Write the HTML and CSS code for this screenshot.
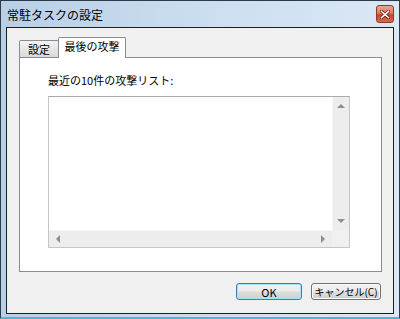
FILE: index.html
```html
<!DOCTYPE html>
<html lang="ja">
<head>
    <meta charset="UTF-8">
    <title>常駐タスクの設定</title>
    <link rel="stylesheet" href="styles.css">
</head>
<body>
    <div class="ventana">
        <div class="titulo">
            <span class="titulo-texto">常駐タスクの設定</span>
            <div class="cerrar">
                <svg width="10" height="9" viewBox="0 0 10 9">
                    <path d="M1.5 1.5 L8.5 7.5 M8.5 1.5 L1.5 7.5" stroke="#6b2416" stroke-width="3.2" stroke-linecap="square"/>
                    <path d="M1.5 1.5 L8.5 7.5 M8.5 1.5 L1.5 7.5" stroke="#ffffff" stroke-width="1.6" stroke-linecap="square"/>
                </svg>
            </div>
        </div>
        <div class="cliente">
            <div class="pestanas">
                <div class="pestana">設定</div>
                <div class="pestana activa">最後の攻撃</div>
            </div>
            <div class="panel">
                <div class="etiqueta">最近の10件の攻撃リスト:</div>
                <div class="lista">
                    <div class="lista-fila">
                        <div class="lista-contenido"></div>
                        <div class="barra-v">
                            <span class="flecha arriba"></span>
                            <span class="flecha abajo"></span>
                        </div>
                    </div>
                    <div class="barra-h">
                        <div class="barra-h-pista">
                            <span class="flecha izquierda"></span>
                            <span class="flecha derecha"></span>
                        </div>
                        <div class="esquina"></div>
                    </div>
                </div>
            </div>
            <div class="botones">
                <button class="boton defecto">OK</button>
                <button class="boton">キャンセル(C)</button>
            </div>
        </div>
    </div>
</body>
</html>
```

FILE: styles.css
```css
/* Ventana estilo Vista */
body {
    margin: 0;
    padding: 0;
    font-family: "Noto Sans CJK JP", "Noto Sans", sans-serif;
    font-size: 11px;
    color: #000;
    background: #fff;
}

.ventana {
    width: 400px;
    height: 319px;
    box-sizing: border-box;
    border: 1px solid #2d3a48;
    border-bottom: 2px solid #4eb7c8;
    background: linear-gradient(90deg, #b8cfe6 0%, #c9dcef 45%, #dbe8f5 100%);
    display: flex;
    flex-direction: column;
}

.titulo {
    height: 26px;
    display: flex;
    align-items: flex-start;
    justify-content: space-between;
    padding: 0 5px 0 6px;
}

.titulo-texto {
    font-size: 12px;
    line-height: 14px;
    margin-top: 7px;
}

.cerrar {
    width: 18px;
    height: 18px;
    margin-top: 4px;
    box-sizing: border-box;
    border: 1px solid #8a3b2b;
    border-radius: 3px;
    background: linear-gradient(180deg, #eba590 0%, #de7c62 45%, #c8442a 55%, #d8684c 100%);
    display: flex;
    align-items: center;
    justify-content: center;
}

.cliente {
    flex: 1;
    margin: 0 5px 3px 5px;
    border: 1px solid #1e1e1e;
    background-color: #f0f0f0;
    display: flex;
    flex-direction: column;
}

.pestanas {
    display: flex;
    align-items: flex-end;
    margin: 9px 0 0 12px;
    height: 20px;
}

.pestana {
    height: 16px;
    width: 38px;
    border: 1px solid #898c95;
    border-bottom: none;
    background: linear-gradient(180deg, #f3f3f3 0%, #e6e6e6 50%, #d9d9d9 100%);
    text-align: center;
    line-height: 16px;
    border-radius: 2px 2px 0 0;
}

.pestana.activa {
    height: 20px;
    width: 66px;
    margin-left: -1px;
    margin-bottom: -1px;
    background: #fff;
    line-height: 17px;
    position: relative;
    z-index: 1;
}

.panel {
    height: 215px;
    box-sizing: border-box;
    margin: 0 11px 0 12px;
    border: 1px solid #898c95;
    background: #fff;
    padding: 15px 0 0 28px;
}

.etiqueta {
    line-height: 14px;
    height: 14px;
    margin-bottom: 9px;
}

.lista {
    width: 302px;
    height: 152px;
    box-sizing: border-box;
    border: 1px solid #c3c5cb;
    border-top-color: #a9abb2;
    display: flex;
    flex-direction: column;
}

.lista-fila {
    flex: 1;
    display: flex;
}

.lista-contenido {
    flex: 1;
    background: #fff;
}

.barra-v {
    width: 17px;
    background: #ededed;
    border-left: 1px solid #f6f6f6;
    box-sizing: border-box;
    display: flex;
    flex-direction: column;
    justify-content: space-between;
    align-items: center;
    padding: 7px 0;
}

.barra-h {
    height: 17px;
    display: flex;
}

.barra-h-pista {
    flex: 1;
    background: #ededed;
    border-top: 1px solid #f6f6f6;
    display: flex;
    justify-content: space-between;
    align-items: center;
    padding: 0 7px;
}

.esquina {
    width: 17px;
    background: #f0f0f0;
}

.flecha {
    width: 0;
    height: 0;
    display: block;
}

.arriba {
    border-left: 4px solid transparent;
    border-right: 4px solid transparent;
    border-bottom: 4px solid #8e8e8e;
}

.abajo {
    border-left: 4px solid transparent;
    border-right: 4px solid transparent;
    border-top: 4px solid #8e8e8e;
}

.izquierda {
    border-top: 4px solid transparent;
    border-bottom: 4px solid transparent;
    border-right: 4px solid #8e8e8e;
}

.derecha {
    border-top: 4px solid transparent;
    border-bottom: 4px solid transparent;
    border-left: 4px solid #8e8e8e;
}

.botones {
    display: flex;
    justify-content: flex-end;
    gap: 9px;
    margin: 11px 12px 0 0;
}

.boton {
    height: 17px;
    width: 70px;
    padding: 0;
    font-family: "Noto Sans CJK JP", "Noto Sans", sans-serif;
    font-size: 10px;
    line-height: 14px;
    white-space: nowrap;
    color: #000;
    border: 1px solid #707070;
    border-radius: 3px;
    background: linear-gradient(180deg, #f2f2f2 0%, #ebebeb 48%, #dddddd 52%, #cfcfcf 100%);
    box-shadow: inset 0 0 0 1px #fbfbfb;
}

.boton.defecto {
    width: 66px;
    font-size: 11px;
    border-color: #3c7fb1;
    box-shadow: inset 0 0 0 1px #a5e0f7;
}
```
